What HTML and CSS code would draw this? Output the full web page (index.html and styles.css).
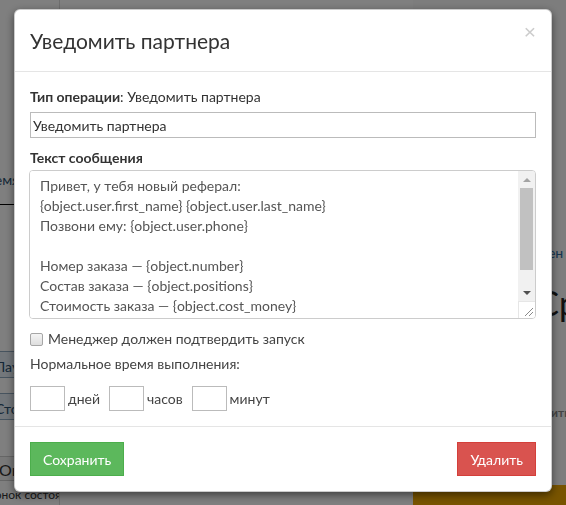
FILE: index.html
```html
<!DOCTYPE html>
<html lang="ru">
<head>
    <meta charset="UTF-8">
    <meta name="viewport" content="width=device-width, initial-scale=1.0">
    <title>Уведомить партнера</title>
    <link rel="stylesheet" href="styles.css">
</head>
<body>
    <div class="page">
        <div class="page-left">
            <div class="bg-text bg-time">Время</div>
            <div class="bg-rule"></div>
            <div class="bg-btn bg-btn-a">Пауза</div>
            <div class="bg-btn bg-btn-b">Стоп</div>
            <div class="bg-btn bg-btn-ok">Ок</div>
            <div class="bg-small">Звонок состоялся</div>
        </div>
        <div class="page-right">
            <div class="bg-link">Изменен -</div>
            <div class="bg-big">Ср</div>
            <div class="bg-grey">Сохранить</div>
            <div class="bg-orange"></div>
        </div>
    </div>

    <div class="backdrop"></div>

    <div class="modal">
        <div class="modal-header">
            <h4 class="modal-title">Уведомить партнера</h4>
            <span class="close">&times;</span>
        </div>
        <div class="modal-body">
            <div class="form-label"><b>Тип операции</b>: Уведомить партнера</div>
            <input class="form-control" type="text" value="Уведомить партнера">

            <div class="form-label label-msg"><b>Текст сообщения</b></div>
            <div class="message-box">
                <textarea class="message">Привет, у тебя новый реферал:
{object.user.first_name} {object.user.last_name}
Позвони ему: {object.user.phone}

Номер заказа — {object.number}
Состав заказа — {object.positions}
Стоимость заказа — {object.cost_money}
Адрес доставки — {object.address}
Комментарий — {object.comment}</textarea>
                <div class="scrollbar">
                    <div class="sb-btn sb-up"></div>
                    <div class="sb-track"><div class="sb-thumb"></div></div>
                    <div class="sb-btn sb-down"></div>
                    <div class="sb-corner">
                        <svg width="17" height="17" viewBox="0 0 17 17">
                            <path d="M7 15 L15 7 M11 15 L15 11" stroke="#8a8a8a" stroke-width="1" fill="none"/>
                        </svg>
                    </div>
                </div>
            </div>

            <label class="check">
                <input type="checkbox">
                <span>Менеджер должен подтвердить запуск</span>
            </label>

            <div class="time-label">Нормальное время выполнения:</div>
            <div class="time-row">
                <input class="time-input" type="text"><span>дней</span>
                <input class="time-input" type="text"><span>часов</span>
                <input class="time-input" type="text"><span>минут</span>
            </div>
        </div>
        <div class="modal-footer">
            <button class="btn btn-success">Сохранить</button>
            <button class="btn btn-danger">Удалить</button>
        </div>
    </div>
</body>
</html>
```
FILE: styles.css
```css
* {
    box-sizing: border-box;
}

body {
    margin: 0;
    width: 566px;
    height: 505px;
    overflow: hidden;
    background: #fff;
    font-family: 'Lato', 'Liberation Sans', sans-serif;
    font-size: 14px;
    line-height: 20px;
    color: #333;
}

/* страница под модальным окном */
.page {
    display: flex;
    justify-content: space-between;
    height: 505px;
    overflow: hidden;
}

.page-left {
    width: 60px;
    display: flex;
    flex-direction: column;
    overflow: hidden;
    border-right: 1px solid #ddd;
}

.bg-text {
    margin: 170px 0 0 -22px;
    color: #2a4f6e;
    font-size: 14px;
}

.bg-rule {
    margin-top: 14px;
    width: 30px;
    height: 3px;
    background: #000;
}

.bg-btn {
    margin: 0 0 0 -40px;
    width: 80px;
    height: 30px;
    border: 1px solid #8fa8be;
    border-radius: 5px;
    background: #e6eef6;
    color: #2a4f6e;
    padding: 5px 0 0 34px;
    white-space: nowrap;
}

.bg-btn-a {
    margin-top: 146px;
}

.bg-btn-b {
    margin-top: 15px;
}

.bg-btn-ok {
    margin-top: 36px;
    height: 28px;
    border-radius: 0;
    background: #f2f2f2;
    border-color: #ccc;
    color: #333;
    font-size: 16px;
    padding: 3px 0 0 38px;
}

.bg-small {
    margin: 4px 0 0 -18px;
    font-size: 12px;
    color: #333;
    white-space: nowrap;
}

.page-right {
    width: 153px;
    display: flex;
    flex-direction: column;
    align-items: flex-end;
    background: #fafafa;
}

.bg-link {
    margin: 243px -6px 0 0;
    width: 80px;
    text-align: right;
    color: #2a6aa0;
    white-space: nowrap;
}

.bg-big {
    margin: 22px -12px 0 0;
    width: 60px;
    text-align: right;
    font-size: 34px;
    line-height: 36px;
    color: #222;
}

.bg-grey {
    margin: 82px -4px 0 0;
    width: 80px;
    text-align: right;
    font-size: 12px;
    font-weight: bold;
    color: #888;
    white-space: nowrap;
}

.bg-orange {
    margin-top: 62px;
    width: 153px;
    height: 20px;
    background: #f0a800;
}

.backdrop {
    position: fixed;
    inset: 0;
    background: rgba(0, 0, 0, 0.5);
}

/* модальное окно */
.modal {
    position: fixed;
    left: 14px;
    top: 9px;
    width: 538px;
    background: #fff;
    border: 1px solid rgba(0, 0, 0, 0.2);
    border-radius: 6px;
    box-shadow: 0 3px 9px rgba(0, 0, 0, 0.5);
}

.modal-header {
    display: flex;
    justify-content: space-between;
    align-items: flex-start;
    padding: 15px;
    border-bottom: 1px solid #e5e5e5;
}

.modal-title {
    margin: 0;
    font-size: 21px;
    line-height: 31px;
    font-weight: normal;
    color: #333;
}

.close {
    margin-top: -4px;
    font-size: 21px;
    line-height: 21px;
    color: #ccc;
    font-family: 'Liberation Sans', sans-serif;
}

.modal-body {
    padding: 15px;
}

.form-label {
    margin-bottom: 5px;
}

.form-label b {
    font-weight: bold;
}

.form-control {
    display: block;
    width: 100%;
    font-family: inherit;
    font-size: 14px;
    color: #333;
    border: 1px solid #bbb;
    border-radius: 0;
    background: #fff;
}

input.form-control {
    height: 26px;
    padding: 0 2px;
}

.label-msg {
    margin-top: 10px;
    margin-bottom: 2px;
}

.message-box {
    display: flex;
    height: 149px;
    margin-left: -1px;
    border: 1px solid #ccc;
    border-radius: 4px;
    overflow: hidden;
}

.message {
    flex: 1;
    padding: 5px 10px;
    font-family: inherit;
    font-size: 14px;
    line-height: 20px;
    color: #555;
    border: none;
    outline: none;
    resize: none;
    overflow: hidden;
}

/* нарисованная полоса прокрутки */
.scrollbar {
    width: 17px;
    display: flex;
    flex-direction: column;
    background: #f1f1f1;
}

.sb-btn {
    height: 17px;
    display: flex;
    align-items: center;
    justify-content: center;
}

.sb-up::before,
.sb-down::before {
    content: '';
    border-left: 4px solid transparent;
    border-right: 4px solid transparent;
}

.sb-up::before {
    border-bottom: 4px solid #a3a3a3;
}

.sb-down::before {
    border-top: 4px solid #505050;
}

.sb-track {
    flex: 1;
}

.sb-thumb {
    height: 82px;
    margin: 0 2px;
    background: #c1c1c1;
}

.sb-corner {
    height: 17px;
    background: #fff;
    border-left: 1px solid #e6e6e6;
    border-top: 1px solid #e6e6e6;
}

.sb-corner svg {
    display: block;
    margin: -1px 0 0 -1px;
}

.check {
    display: flex;
    align-items: center;
    margin-top: 10px;
    height: 20px;
    color: #444;
}

.check input {
    appearance: none;
    margin: 0 5px 0 0;
    width: 13px;
    height: 13px;
    border: 1px solid #a6a6a6;
    border-radius: 2px;
    background: linear-gradient(#f4f4f4, #dedede);
}

.time-label {
    margin-top: 5px;
    color: #444;
}

.time-row {
    display: flex;
    align-items: center;
    margin-top: 12px;
    color: #444;
}

.time-input {
    width: 35px;
    height: 25px;
    border: 1px solid #bbb;
    font-family: inherit;
    padding: 0 3px;
}

.time-row span {
    margin: 0 9px 0 3px;
}

.modal-footer {
    display: flex;
    justify-content: space-between;
    padding: 15px;
    border-top: 1px solid #e5e5e5;
}

.btn {
    height: 34px;
    padding: 6px 12px;
    font-family: inherit;
    font-size: 14px;
    color: #fff;
    border: 1px solid transparent;
    border-radius: 0;
    cursor: pointer;
}

.btn-success {
    background: #5cb85c;
    border-color: #4cae4c;
}

.btn-danger {
    background: #d9534f;
    border-color: #d43f3a;
}
```
